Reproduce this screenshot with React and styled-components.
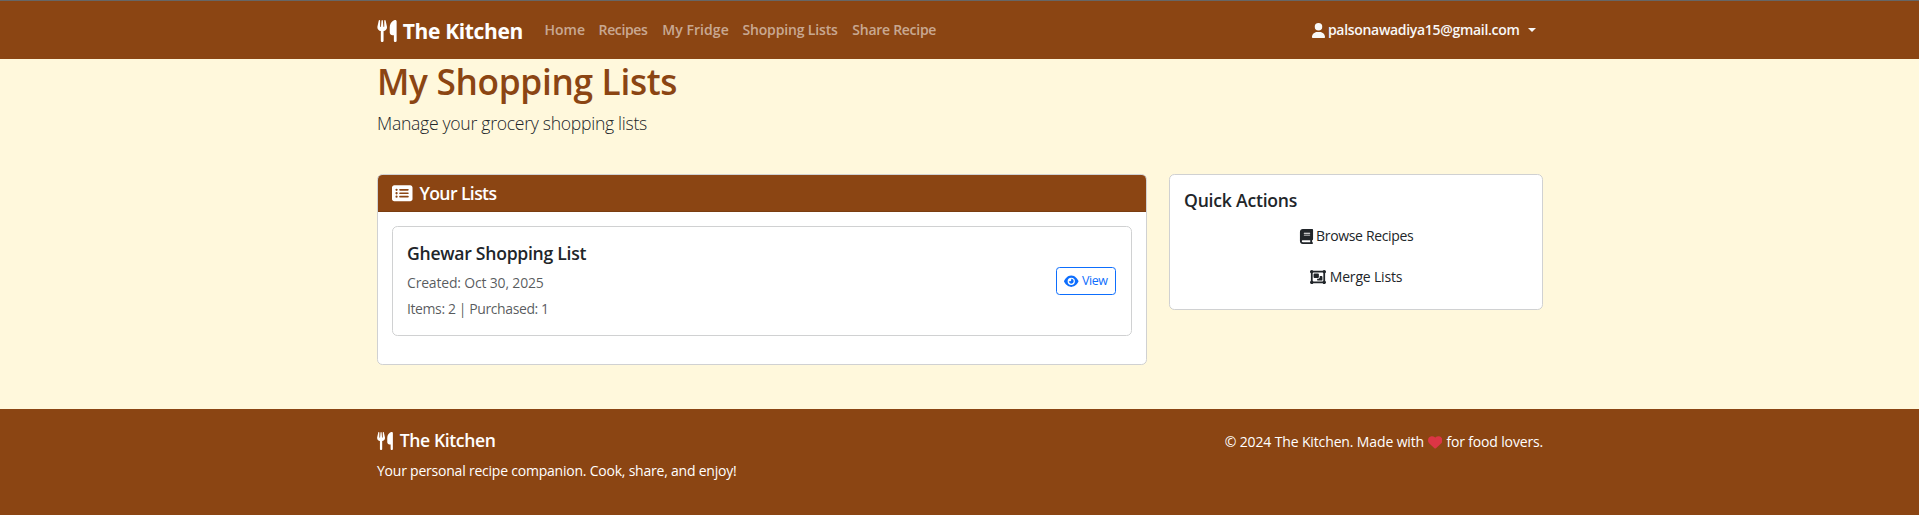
import React from 'react';
import styled, { createGlobalStyle } from 'styled-components';
import {
  FaUtensils, FaUser, FaRectangleList, FaBook, FaObjectGroup, FaEye, FaHeart,
} from 'react-icons/fa6';

const brown = '#8b4513';

const GlobalStyle = createGlobalStyle`
  *, *::before, *::after { box-sizing: border-box; }
  body {
    margin: 0;
    background: #fff8dc;
    color: #212529;
    font: 400 14px/22px "Open Sans", sans-serif;
    white-space: nowrap;
  }
  h1, h5, p { margin: 0; }
  svg { display: block; flex: none; }
  a { color: inherit; text-decoration: none; }
`;

const Page = styled.div`
  min-height: 515px;
  display: flex;
  flex-direction: column;
`;

const Container = styled.div`
  width: 1167px;
  margin: 0 auto;
  padding-left: 1px;
  display: flex;
  align-items: ${p => p.$align || 'flex-start'};
`;

const Label = styled.span`
  letter-spacing: ${p => p.$ls || 0}px;
`;

const Navbar = styled.nav`
  height: 59px;
  border-top: 1px solid #666;
  background: ${brown};
  display: flex;
`;

const Brand = styled.a`
  display: flex;
  align-items: center;
  gap: 5px;
  width: 167.4px;
  color: #fff;
  font-size: 21px;
  font-weight: 700;
  letter-spacing: -0.36px;
  line-height: 32px;
  padding-top: 1px;
  svg { margin-left: -1.2px; }
`;

const NavLinks = styled.div`
  display: flex;
  flex: 1;
  color: rgba(255, 255, 255, 0.55);
  font-weight: 600;
`;

const NavLink = styled.a`
  width: ${p => p.$w}px;
  letter-spacing: ${p => p.$ls}px;
`;

const UserMenu = styled.a`
  display: flex;
  align-items: center;
  color: #f8f8f8;
  font-weight: 600;
  padding-right: 7px;
  svg { margin-right: 2px; }
`;

const Caret = styled.span`
  margin-left: 8.5px;
  border-top: 4px solid;
  border-left: 4px solid transparent;
  border-right: 4px solid transparent;
`;

const Header = styled.header`
  padding-top: 1px;
  margin-bottom: 37px;
`;

const Title = styled.h1`
  color: ${brown};
  font-size: 35.2px;
  font-weight: 600;
  line-height: 43px;
  letter-spacing: -0.3px;
  margin-bottom: 7px;
`;

const Lead = styled.p`
  font-size: 17.6px;
  font-weight: 300;
  line-height: 27px;
  letter-spacing: -0.29px;
`;

const Card = styled.section`
  width: ${p => p.$w ? p.$w + 'px' : 'auto'};
  background: #fff;
  border: 1px solid #d0d1d2;
  border-radius: 5.4px;
  overflow: hidden;
`;

const CardHeader = styled.div`
  display: flex;
  align-items: center;
  gap: 6.5px;
  height: 37px;
  padding: 0 14.4px;
  background: ${brown};
  border-bottom: 1px solid #7a3d11;
  color: #fff;
`;

const CardBody = styled.div`
  padding: 14px 14px ${p => p.$bottom || 14}px;
`;

const Heading = styled.h5`
  font-size: 17.6px;
  font-weight: 600;
  line-height: ${p => p.$lh || 22}px;
  letter-spacing: ${p => p.$ls}px;
  margin-bottom: ${p => p.$mb || 0}px;
`;

const ListCard = styled(Card)`
  display: flex;
  align-items: center;
  justify-content: space-between;
  padding: 15px 15px 15px 14px;
  margin-bottom: 14px;
`;

const Meta = styled.p`
  color: rgba(33, 37, 41, 0.75);
  letter-spacing: ${p => p.$ls}px;
  & + & { margin-top: 4px; }
`;

const ViewButton = styled.a`
  display: flex;
  align-items: center;
  justify-content: center;
  gap: 3px;
  width: 60px;
  height: 28px;
  border: 1px solid #0d6efd;
  border-radius: 3.6px;
  color: #0d6efd;
  font-size: 12.5px;
  letter-spacing: -0.4px;
`;

const Actions = styled.div`
  display: grid;
  gap: 7px;
`;

const Action = styled.a`
  display: flex;
  align-items: center;
  justify-content: center;
  gap: ${p => p.$gap}px;
  height: 34px;
  letter-spacing: ${p => p.$ls}px;
`;

const Footer = styled.footer`
  flex: 1;
  margin-top: 44px;
  padding: 21px 0;
  background: ${brown};
  color: #fff;
`;

const FooterAbout = styled.div`
  flex: 1;
`;

const FooterBrand = styled.div`
  display: flex;
  align-items: center;
  gap: 5.5px;
  margin-bottom: 9px;
  svg { margin-left: -0.8px; }
`;

const Copyright = styled.p`
  display: flex;
  align-items: center;
  gap: 4px;
  padding-top: 1px;
`;

const Columns = styled(Container)`
  gap: 22px;
`;

const links = [
  ['Home', 54.2, 0.03], ['Recipes', 63.6, -0.36], ['My Fridge', 80.3, 0.07],
  ['Shopping Lists', 109.9, -0.16], ['Share Recipe', 90, -0.28],
];

export default function App() {
  return (
    <Page>
      <GlobalStyle />
      <Navbar>
        <Container $align="center">
          <Brand href="#"><FaUtensils size={22} />The Kitchen</Brand>
          <NavLinks>
            {links.map(([name, w, ls]) => <NavLink key={name} href="#" $w={w} $ls={ls}>{name}</NavLink>)}
          </NavLinks>
          <UserMenu href="#">
            <FaUser size={15} />
            <Label $ls={-0.305}>palsonawadiya15@gmail.com</Label>
            <Caret />
          </UserMenu>
        </Container>
      </Navbar>

      <Container>
        <Header>
          <Title>My Shopping Lists</Title>
          <Lead>Manage your grocery shopping lists</Lead>
        </Header>
      </Container>

      <Columns>
        <Card $w={770}>
          <CardHeader>
            <FaRectangleList size={20.5} />
            <Heading $ls={-0.6}>Your Lists</Heading>
          </CardHeader>
          <CardBody>
            <ListCard>
              <div>
                <Heading $ls={-0.275} $mb={8}>Ghewar Shopping List</Heading>
                <Meta $ls={-0.18}>Created: Oct 30, 2025</Meta>
                <Meta $ls={-0.4}>Items: 2 | Purchased: 1</Meta>
              </div>
              <ViewButton href="#"><FaEye size={14.5} />View</ViewButton>
            </ListCard>
          </CardBody>
        </Card>
        <Card $w={374}>
          <CardBody $bottom={15}>
            <Heading $ls={-0.22} $lh={22} $mb={8}>Quick Actions</Heading>
            <Actions>
              <Action href="#" $gap={2.5} $ls={-0.337}><FaBook size={15} />Browse Recipes</Action>
              <Action href="#" $gap={4} $ls={-0.178}><FaObjectGroup size={16} />Merge Lists</Action>
            </Actions>
          </CardBody>
        </Card>
      </Columns>

      <Footer>
        <Container>
          <FooterAbout>
            <FooterBrand>
              <FaUtensils size={18} />
              <Heading as="div" $lh={21} $ls={-0.397}>The Kitchen</Heading>
            </FooterBrand>
            <Label as="p" $ls={-0.22}>Your personal recipe companion. Cook, share, and enjoy!</Label>
          </FooterAbout>
          <Copyright>
            <Label $ls={-0.132}>© 2024 The Kitchen. Made with</Label>
            <FaHeart size={14.4} color="#dc3545" />
            <Label $ls={-0.163}>for food lovers.</Label>
          </Copyright>
        </Container>
      </Footer>
    </Page>
  );
}
